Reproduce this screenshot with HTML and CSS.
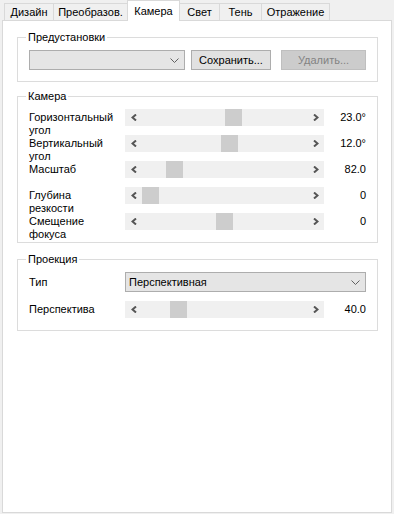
FILE: index.html
```html
<!DOCTYPE html>
<html lang="ru">

<head>
    <meta charset="UTF-8">
    <meta name="viewport" content="width=device-width, initial-scale=1.0">
    <title>Камера</title>
    <link rel="stylesheet" href="styles.css">
</head>

<body>
    <div class="tabs">
        <div class="tab t-design">Дизайн</div>
        <div class="tab t-transform">Преобразов.</div>
        <div class="tab t-camera active">Камера</div>
        <div class="tab t-light">Свет</div>
        <div class="tab t-shadow">Тень</div>
        <div class="tab t-reflect">Отражение</div>
    </div>

    <div class="panel">
        <!-- Предустановки -->
        <fieldset class="group presets">
            <legend>Предустановки</legend>
            <div class="group-body preset-row">
                <div class="combo preset-combo">
                    <span class="combo-text"></span>
                    <svg class="combo-arrow" width="9" height="5" viewBox="0 0 9 5"><path d="M0.5 0.5 L4.5 4.5 L8.5 0.5" fill="none" stroke="#606060" stroke-width="1"/></svg>
                </div>
                <button class="btn save">Сохранить...</button>
                <button class="btn delete" disabled>Удалить...</button>
            </div>
        </fieldset>

        <!-- Камера -->
        <fieldset class="group camera">
            <legend>Камера</legend>
            <div class="group-body rows">
                <div class="row">
                    <div class="label">Горизонтальный<br>угол</div>
                    <div class="slider">
                        <span class="arrow"><svg width="6" height="7" viewBox="0 0 6 7"><path d="M5 0.5 L1.5 3.5 L5 6.5" fill="none" stroke="#555" stroke-width="2"/></svg></span>
                        <span class="track"><span class="thumb" style="left: 83px"></span></span>
                        <span class="arrow"><svg width="6" height="7" viewBox="0 0 6 7"><path d="M1 0.5 L4.5 3.5 L1 6.5" fill="none" stroke="#555" stroke-width="2"/></svg></span>
                    </div>
                    <div class="value">23.0°</div>
                </div>
                <div class="row">
                    <div class="label">Вертикальный<br>угол</div>
                    <div class="slider">
                        <span class="arrow"><svg width="6" height="7" viewBox="0 0 6 7"><path d="M5 0.5 L1.5 3.5 L5 6.5" fill="none" stroke="#555" stroke-width="2"/></svg></span>
                        <span class="track"><span class="thumb" style="left: 79px"></span></span>
                        <span class="arrow"><svg width="6" height="7" viewBox="0 0 6 7"><path d="M1 0.5 L4.5 3.5 L1 6.5" fill="none" stroke="#555" stroke-width="2"/></svg></span>
                    </div>
                    <div class="value">12.0°</div>
                </div>
                <div class="row">
                    <div class="label">Масштаб</div>
                    <div class="slider">
                        <span class="arrow"><svg width="6" height="7" viewBox="0 0 6 7"><path d="M5 0.5 L1.5 3.5 L5 6.5" fill="none" stroke="#555" stroke-width="2"/></svg></span>
                        <span class="track"><span class="thumb" style="left: 24px"></span></span>
                        <span class="arrow"><svg width="6" height="7" viewBox="0 0 6 7"><path d="M1 0.5 L4.5 3.5 L1 6.5" fill="none" stroke="#555" stroke-width="2"/></svg></span>
                    </div>
                    <div class="value">82.0</div>
                </div>
                <div class="row">
                    <div class="label">Глубина<br>резкости</div>
                    <div class="slider">
                        <span class="arrow"><svg width="6" height="7" viewBox="0 0 6 7"><path d="M5 0.5 L1.5 3.5 L5 6.5" fill="none" stroke="#555" stroke-width="2"/></svg></span>
                        <span class="track"><span class="thumb" style="left: 0px"></span></span>
                        <span class="arrow"><svg width="6" height="7" viewBox="0 0 6 7"><path d="M1 0.5 L4.5 3.5 L1 6.5" fill="none" stroke="#555" stroke-width="2"/></svg></span>
                    </div>
                    <div class="value">0</div>
                </div>
                <div class="row">
                    <div class="label">Смещение<br>фокуса</div>
                    <div class="slider">
                        <span class="arrow"><svg width="6" height="7" viewBox="0 0 6 7"><path d="M5 0.5 L1.5 3.5 L5 6.5" fill="none" stroke="#555" stroke-width="2"/></svg></span>
                        <span class="track"><span class="thumb" style="left: 74px"></span></span>
                        <span class="arrow"><svg width="6" height="7" viewBox="0 0 6 7"><path d="M1 0.5 L4.5 3.5 L1 6.5" fill="none" stroke="#555" stroke-width="2"/></svg></span>
                    </div>
                    <div class="value">0</div>
                </div>
            </div>
        </fieldset>

        <!-- Проекция -->
        <fieldset class="group projection">
            <legend>Проекция</legend>
            <div class="group-body rows">
                <div class="row row-combo">
                    <div class="label">Тип</div>
                    <div class="combo type-combo">
                        <span class="combo-text">Перспективная</span>
                        <svg class="combo-arrow" width="9" height="5" viewBox="0 0 9 5"><path d="M0.5 0.5 L4.5 4.5 L8.5 0.5" fill="none" stroke="#606060" stroke-width="1"/></svg>
                    </div>
                </div>
                <div class="row">
                    <div class="label">Перспектива</div>
                    <div class="slider">
                        <span class="arrow"><svg width="6" height="7" viewBox="0 0 6 7"><path d="M5 0.5 L1.5 3.5 L5 6.5" fill="none" stroke="#555" stroke-width="2"/></svg></span>
                        <span class="track"><span class="thumb" style="left: 28px"></span></span>
                        <span class="arrow"><svg width="6" height="7" viewBox="0 0 6 7"><path d="M1 0.5 L4.5 3.5 L1 6.5" fill="none" stroke="#555" stroke-width="2"/></svg></span>
                    </div>
                    <div class="value">40.0</div>
                </div>
            </div>
        </fieldset>
    </div>
</body>

</html>
```

FILE: styles.css
```css
* {
    margin: 0;
    padding: 0;
    box-sizing: border-box;
}

body {
    width: 394px;
    height: 514px;
    overflow: hidden;
    background-color: #f0f0f0;
    font-family: "Liberation Sans", Arial, sans-serif;
    font-size: 11px;
    color: #000;
}

/* вкладки */
.tabs {
    display: flex;
    align-items: flex-end;
    height: 20px;
    padding-left: 4px;
}

.tab {
    height: 17px;
    border: 1px solid #d9d9d9;
    border-bottom: none;
    background-color: #f0f0f0;
    text-align: center;
    line-height: 16px;
    white-space: nowrap;
    margin-left: -1px;
}

.tab:first-child {
    margin-left: 0;
}

.tab.active {
    position: relative;
    z-index: 1;
    height: 21px;
    margin-bottom: -1px;
    padding-top: 2px;
    background-color: #fff;
}

.t-design { width: 50px; }
.t-transform { width: 75px; }
.t-camera { width: 53px; }
.t-light { width: 41px; }
.t-shadow { width: 43px; }
.t-reflect { width: 69px; }

.panel {
    height: 493px;
    margin: 0 2px;
    border: 1px solid #d9d9d9;
    background-color: #fff;
}

/* группы */
.group {
    margin: 6px 13px 0 14px;
    border: 1px solid #dcdcdc;
    padding: 0;
    min-width: 0;
}

.group legend {
    margin-left: 8px;
    padding: 0 2px;
    line-height: 16px;
}

.presets {
    margin-top: 8px;
}

.projection {
    margin-top: 8px;
}

.group-body {
    padding: 5px 11px 12px;
}

.presets .group-body {
    padding-bottom: 11px;
}

.preset-row {
    display: flex;
}

/* комбобокс */
.combo {
    display: flex;
    align-items: center;
    height: 20px;
    border: 1px solid #adadad;
    background-color: #e5e5e5;
    padding: 0 5px 0 3px;
}

.combo-text {
    flex: 1;
    line-height: 18px;
    white-space: nowrap;
}

.preset-combo {
    width: 156px;
}

.type-combo {
    grid-column: 2 / 4;
}

/* кнопки */
.btn {
    height: 20px;
    border: 1px solid #adadad;
    background-color: #e1e1e1;
    font-family: inherit;
    font-size: 11px;
    color: #000;
    line-height: 18px;
}

.btn.save {
    width: 80px;
    margin-left: 6px;
}

.btn.delete {
    width: 85px;
    margin-left: 10px;
    border-color: #bfbfbf;
    background-color: #cccccc;
    color: #838383;
}

/* строки с ползунками */
.rows {
    display: flex;
    flex-direction: column;
    gap: 9px;
}

.row {
    display: grid;
    grid-template-columns: 96px 199px 1fr;
    height: 17px;
}

.row-combo {
    height: 20px;
}

.label {
    line-height: 13px;
    padding-top: 2px;
    white-space: nowrap;
}

.row-combo .label {
    padding-top: 4px;
}

.slider {
    display: flex;
    height: 17px;
    background-color: #f0f0f0;
}

.arrow {
    display: flex;
    align-items: center;
    justify-content: center;
    width: 17px;
    height: 17px;
}

.track {
    position: relative;
    flex: 1;
}

.thumb {
    position: absolute;
    top: 0;
    width: 17px;
    height: 17px;
    background-color: #cdcdcd;
}

.value {
    text-align: right;
    line-height: 17px;
}
```
